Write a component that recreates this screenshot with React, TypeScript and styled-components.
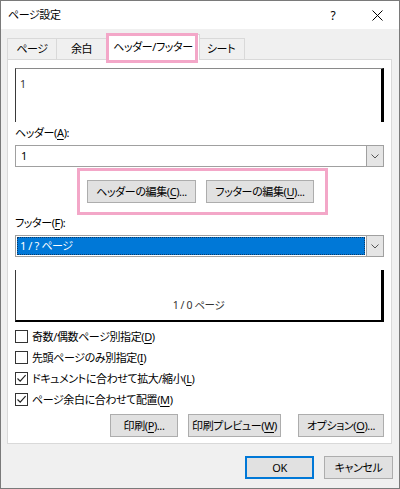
import React from 'react';
import styled, { createGlobalStyle } from 'styled-components';

const Global = createGlobalStyle`
  html, body { margin: 0; padding: 0; background: #ffffff; }
  body {
    font-family: "Noto Sans", "Noto Sans CJK JP", sans-serif;
    font-size: 11px;
    letter-spacing: -0.4px;
    color: #000;
    font-feature-settings: "palt";
  }
  * { box-sizing: border-box; }
`;

const Window = styled.div`
  position: relative;
  width: 400px;
  height: 489px;
  border: 1px solid #7a7a7a;
  background: #f0f0f0;
  display: flex;
  flex-direction: column;
`;

const TitleBar = styled.div`
  height: 28px;
  background: #ffffff;
  display: flex;
  align-items: center;
  padding-left: 7px;
`;

const Title = styled.div`
  flex: 1;
  line-height: 14px;
`;

const TitleButton = styled.div`
  width: 44px;
  height: 28px;
  display: flex;
  align-items: center;
  justify-content: center;
  font-size: 12px;
`;

const Body = styled.div`
  flex: 1;
  display: flex;
  flex-direction: column;
  padding: 5px 6px 0 6px;
`;

const TabStrip = styled.div`
  display: flex;
  align-items: flex-end;
  height: 25px;
`;

const Tab = styled.div<{ $w: number; $active?: boolean }>`
  position: relative;
  flex: none;
  width: ${p => p.$w}px;
  height: ${p => (p.$active ? 26 : 21)}px;
  margin: ${p => (p.$active ? '0 -2px -1px -2px' : '0')};
  z-index: ${p => (p.$active ? 2 : 1)};
  background: ${p => (p.$active ? '#ffffff' : '#f0f0f0')};
  border: 1px solid #d9d9d9;
  border-bottom: none;
  display: flex;
  align-items: center;
  justify-content: center;
  white-space: nowrap;
  padding-bottom: ${p => (p.$active ? 2 : 0)}px;
  line-height: 14px;
  & + & { margin-left: ${p => (p.$active ? -2 : -1)}px; }
`;

const Panel = styled.div`
  width: 385px;
  height: 385px;
  background: #ffffff;
  border: 1px solid #d9d9d9;
  padding: 8px 7px 0 7px;
  display: flex;
  flex-direction: column;
`;

const PreviewTop = styled.div`
  height: 54px;
  border-top: 1px solid #8a8a8a;
  border-left: 1px solid #3a3a3a;
  border-right: 3px solid #000;
  padding: 8px 4px 0 4px;
  font-size: 10.5px;
  line-height: 14px;
  color: #333;
`;

const PreviewBottom = styled.div`
  margin-top: 13px;
  height: 52px;
  border-left: 1px solid #3a3a3a;
  border-right: 3px solid #000;
  border-bottom: 2px solid #000;
  display: flex;
  align-items: flex-end;
  justify-content: center;
  padding-bottom: 8px;
  font-size: 10.5px;
  line-height: 14px;
  color: #333;
`;

const FieldLabel = styled.div<{ $mt: number }>`
  margin-top: ${p => p.$mt}px;
  line-height: 14px;
  height: 14px;
`;

const Combo = styled.div`
  margin-top: 5px;
  height: 22px;
  border: 1px solid #a0a0a0;
  background: #fff;
  display: flex;
  align-items: stretch;
`;

const ComboValue = styled.div<{ $selected?: boolean }>`
  flex: 1;
  margin: 1px;
  padding-left: ${p => (p.$selected ? 2 : 3)}px;
  display: flex;
  align-items: center;
  line-height: 14px;
  background: ${p => (p.$selected ? '#0078d7' : 'transparent')};
  color: ${p => (p.$selected ? '#ffffff' : '#000')};
  border: 1px dotted ${p => (p.$selected ? '#0a3a6a' : 'transparent')};
`;

const DropButton = styled.div`
  width: 17px;
  border-left: 1px solid #a0a0a0;
  background: #e5e5e5;
  display: flex;
  align-items: center;
  justify-content: center;
`;

const EditRow = styled.div`
  margin-top: 13px;
  display: flex;
  justify-content: center;
  gap: 10px;
  padding-left: 2px;
`;

const PushButton = styled.button<{ $w: number; $ml?: number; $default?: boolean }>`
  width: ${p => p.$w}px;
  height: 23px;
  margin: 0 0 0 ${p => p.$ml ?? 0}px;
  padding: 0;
  background: #e1e1e1;
  border: 1px solid ${p => (p.$default ? '#0078d7' : '#adadad')};
  box-shadow: ${p => (p.$default ? 'inset 0 0 0 1px #0078d7' : 'none')};
  font-family: inherit;
  font-size: 11px;
  letter-spacing: -0.4px;
  font-feature-settings: "palt";
  color: #000;
  line-height: 14px;
  white-space: nowrap;
`;

const CheckList = styled.div`
  margin-top: 4px;
  display: flex;
  flex-direction: column;
`;

const CheckRow = styled.div`
  height: 21px;
  display: flex;
  align-items: center;
  gap: 4px;
  line-height: 14px;
`;

const CheckBox = styled.div`
  width: 13px;
  height: 13px;
  border: 1px solid #333;
  background: #fff;
  display: flex;
  align-items: center;
  justify-content: center;
`;

const ActionRow = styled.div`
  margin-top: 4px;
  display: flex;
  justify-content: flex-end;
`;

const DialogButtons = styled.div`
  margin-top: 12px;
  display: flex;
  justify-content: flex-end;
  gap: 10px;
`;

const Highlight = styled.div<{ $x: number; $y: number; $w: number; $h: number }>`
  position: absolute;
  left: ${p => p.$x}px;
  top: ${p => p.$y}px;
  width: ${p => p.$w}px;
  height: ${p => p.$h}px;
  border: 3px solid #f3a7c8;
  pointer-events: none;
  z-index: 5;
`;

const Mn = styled.span`
  text-decoration: underline;
  text-underline-offset: 2px;
`;

const Chevron = () => (
  <svg width="8" height="5" viewBox="0 0 8 5">
    <path d="M0.5 0.5 L4 4 L7.5 0.5" fill="none" stroke="#555" strokeWidth="1" />
  </svg>
);

const CloseIcon = () => (
  <svg width="11" height="11" viewBox="0 0 11 11">
    <path d="M0.5 0.5 L10.5 10.5 M10.5 0.5 L0.5 10.5" stroke="#000" strokeWidth="1" />
  </svg>
);

const Check: React.FC<{ checked?: boolean }> = ({ checked }) => (
  <CheckBox>
    {checked && (
      <svg width="11" height="11" viewBox="0 0 11 11">
        <path d="M1.5 5.5 L4.2 8.2 L9.6 2.2" fill="none" stroke="#222" strokeWidth="1.2" />
      </svg>
    )}
  </CheckBox>
);

export default function App() {
  return (
    <>
      <Global />
      <Window>
        <TitleBar>
          <Title>ページ設定</Title>
          <TitleButton>?</TitleButton>
          <TitleButton>
            <CloseIcon />
          </TitleButton>
        </TitleBar>
        <Body>
          <TabStrip>
            <Tab $w={50}>ページ</Tab>
            <Tab $w={51}>余白</Tab>
            <Tab $w={94} $active>ヘッダー/フッター</Tab>
            <Tab $w={48}>シート</Tab>
          </TabStrip>
          <Panel>
            <PreviewTop>1</PreviewTop>
            <FieldLabel $mt={4}>
              ヘッダー(<Mn>A</Mn>):
            </FieldLabel>
            <Combo>
              <ComboValue>1</ComboValue>
              <DropButton>
                <Chevron />
              </DropButton>
            </Combo>
            <EditRow>
              <PushButton $w={109}>
                ヘッダーの編集(<Mn>C</Mn>)...
              </PushButton>
              <PushButton $w={108}>
                フッターの編集(<Mn>U</Mn>)...
              </PushButton>
            </EditRow>
            <FieldLabel $mt={13}>
              フッター(<Mn>F</Mn>):
            </FieldLabel>
            <Combo>
              <ComboValue $selected>1 / ? ページ</ComboValue>
              <DropButton>
                <Chevron />
              </DropButton>
            </Combo>
            <PreviewBottom>1 / 0 ページ</PreviewBottom>
            <CheckList>
              <CheckRow>
                <Check />
                <span>
                  奇数/偶数ページ別指定(<Mn>D</Mn>)
                </span>
              </CheckRow>
              <CheckRow>
                <Check />
                <span>
                  先頭ページのみ別指定(<Mn>I</Mn>)
                </span>
              </CheckRow>
              <CheckRow>
                <Check checked />
                <span>
                  ドキュメントに合わせて拡大/縮小(<Mn>L</Mn>)
                </span>
              </CheckRow>
              <CheckRow>
                <Check checked />
                <span>
                  ページ余白に合わせて配置(<Mn>M</Mn>)
                </span>
              </CheckRow>
            </CheckList>
            <ActionRow>
              <PushButton $w={68}>
                印刷(<Mn>P</Mn>)...
              </PushButton>
              <PushButton $w={93} $ml={10}>
                印刷プレビュー(<Mn>W</Mn>)
              </PushButton>
              <PushButton $w={86} $ml={17}>
                オプション(<Mn>O</Mn>)...
              </PushButton>
            </ActionRow>
          </Panel>
          <DialogButtons>
            <PushButton $w={69} $default>
              OK
            </PushButton>
            <PushButton $w={69}>キャンセル</PushButton>
          </DialogButtons>
        </Body>
        <Highlight $x={105} $y={32} $w={92} $h={30} />
        <Highlight $x={76} $y={167} $w={251} $h={47} />
      </Window>
    </>
  );
}
